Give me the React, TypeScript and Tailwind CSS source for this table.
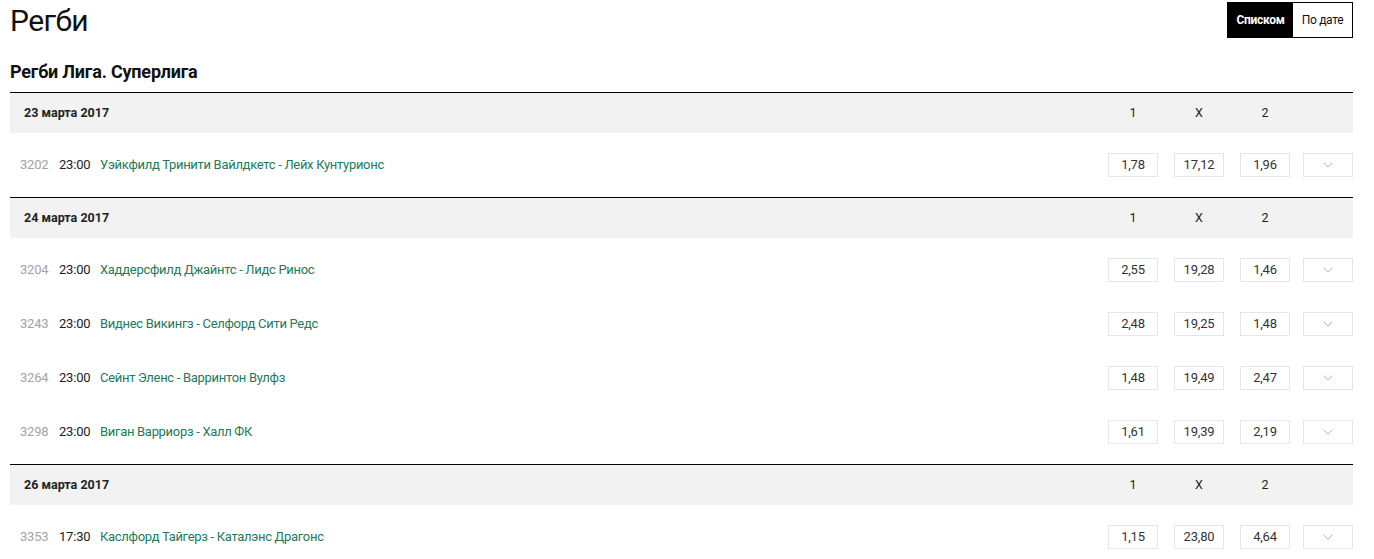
import { ChevronDown } from "lucide-react";

type Match = { id: string; time: string; name: string; odds: [string, string, string] };
type Day = { date: string; matches: Match[] };

const days: Day[] = [
  {
    date: "23 марта 2017",
    matches: [{ id: "3202", time: "23:00", name: "Уэйкфилд Тринити Вайлдкетс - Лейх Кунтурионс", odds: ["1,78", "17,12", "1,96"] }],
  },
  {
    date: "24 марта 2017",
    matches: [
      { id: "3204", time: "23:00", name: "Хаддерсфилд Джайнтс - Лидс Ринос", odds: ["2,55", "19,28", "1,46"] },
      { id: "3243", time: "23:00", name: "Виднес Викингз - Селфорд Сити Редс", odds: ["2,48", "19,25", "1,48"] },
      { id: "3264", time: "23:00", name: "Сейнт Эленс - Варринтон Вулфз", odds: ["1,48", "19,49", "2,47"] },
      { id: "3298", time: "23:00", name: "Виган Варриорз - Халл ФК", odds: ["1,61", "19,39", "2,19"] },
    ],
  },
  {
    date: "26 марта 2017",
    matches: [{ id: "3353", time: "17:30", name: "Каслфорд Тайгерз - Каталэнс Драгонс", odds: ["1,15", "23,80", "4,64"] }],
  },
];

export default function App() {
  return (
    <div className="w-[1374px] h-[559px] overflow-hidden bg-white font-['Roboto',sans-serif] text-[#111]">
      {/* Top bar */}
      <div className="flex items-start justify-between pl-[10px] pr-[21px] pt-[2px]">
        <h1 className="text-[30px] leading-[37px] font-normal tracking-[-0.6px] text-[#111]">Регби</h1>
        <div className="flex h-[36px] border border-black text-[12px]">
          <div className="w-[65px] bg-black text-white font-bold flex items-center justify-center tracking-[-0.3px]">Списком</div>
          <div className="w-[59px] flex items-center justify-center tracking-[-0.3px]">По дате</div>
        </div>
      </div>

      <div className="pl-[10px] pr-[21px]">
        <h2 className="mt-[22px] text-[18px] leading-[22px] font-bold tracking-[-0.2px]">Регби Лига. Суперлига</h2>

        <div className="mt-[9px]">
          {days.map((day) => (
            <section key={day.date} className="border-t border-black">
              <div className="flex items-center h-[40px] bg-[#f2f2f2] text-[12.5px] text-[#222]">
                <div className="pl-[14px] font-bold flex-1">{day.date}</div>
                <div className="flex gap-[16px] pr-[63px]">
                  <span className="w-[50px] text-center">1</span>
                  <span className="w-[50px] text-center">X</span>
                  <span className="w-[50px] text-center">2</span>
                </div>
              </div>

              <div className="py-[5px]">
                {day.matches.map((m) => (
                  <div key={m.id} className="flex items-center h-[54px] text-[13px]">
                    <span className="pl-[10px] w-[49px] text-[#a3a3a3] tracking-[-0.2px]">{m.id}</span>
                    <span className="w-[41px] text-[#222] tracking-[-0.2px]">{m.time}</span>
                    <span className="flex-1 text-[#237a5a] tracking-[-0.3px]">{m.name}</span>
                    <div className="flex items-center gap-[16px]">
                      {m.odds.map((o, i) => (
                        <div key={i} className="w-[50px] h-[24px] border border-[#e6e6e6] flex items-center justify-center text-[13px] text-[#333] tracking-[-0.2px]">
                          {o}
                        </div>
                      ))}
                      <div className="ml-[-3px] w-[50px] h-[24px] border border-[#e6e6e6] flex items-center justify-center">
                        <ChevronDown size={16} strokeWidth={1.5} className="text-[#9cc2b0]" />
                      </div>
                    </div>
                  </div>
                ))}
              </div>
            </section>
          ))}
        </div>
      </div>
    </div>
  );
}
